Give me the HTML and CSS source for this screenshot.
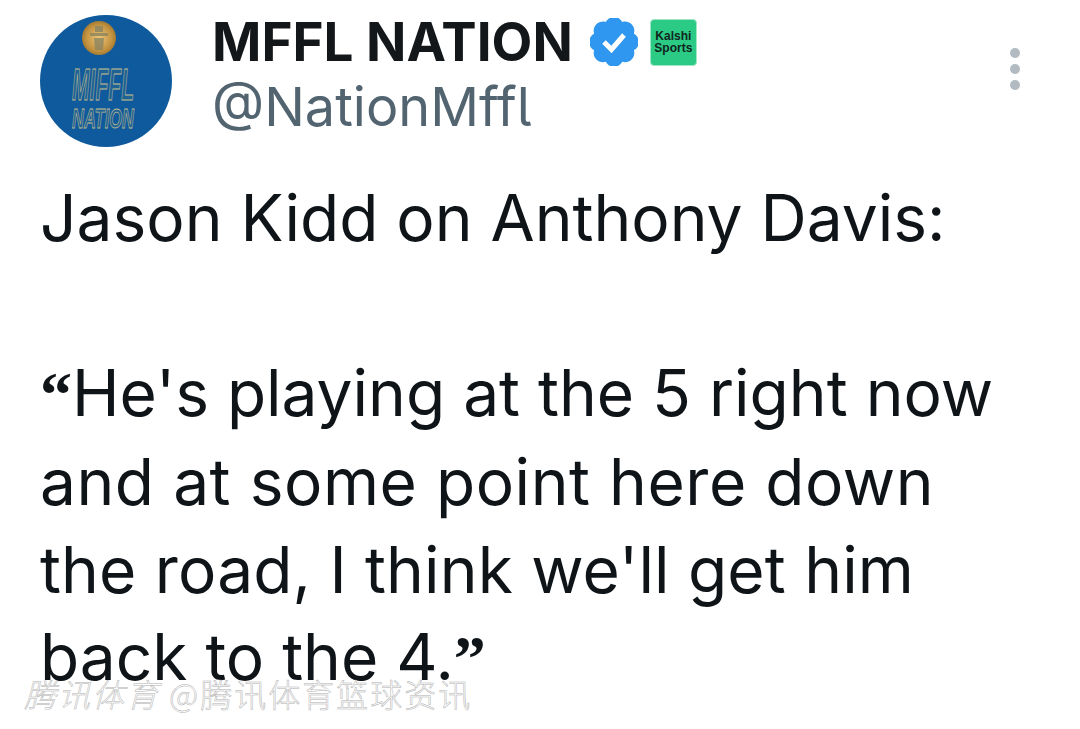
FILE: index.html
```html
<!DOCTYPE html>
<html lang="en">
<head>
<meta charset="utf-8">
<title>MFFL NATION</title>
<link rel="stylesheet" href="styles.css">
</head>
<body>
<main class="post">
  <header class="head">
    <svg class="avatar" viewBox="0 0 132 132" aria-hidden="true">
      <defs>
        <radialGradient id="gold" cx="50%" cy="50%" r="55%">
          <stop offset="0" stop-color="#edc77a"/>
          <stop offset="0.7" stop-color="#c2923f"/>
          <stop offset="1" stop-color="#96702e"/>
        </radialGradient>
      </defs>
      <circle cx="66" cy="66" r="66" fill="#0f5a9c"/>
      <circle cx="59" cy="23" r="17" fill="url(#gold)"/>
      <path d="M55 11h8v6h-8zM50 18h18v3H50zM54 23h10l-1 12h-8z" fill="#8b8560" opacity=".8"/>
      <text class="av-big" x="63" y="85" textLength="62" lengthAdjust="spacingAndGlyphs">MIFFL</text>
      <text class="av-small" x="63" y="113" textLength="62" lengthAdjust="spacingAndGlyphs">NATION</text>
    </svg>
    <div class="who">
      <div class="name-row">
        <span class="name">MFFL NATION</span>
        <svg class="badge" viewBox="0 0 48 48" aria-hidden="true">
          <path fill="#2f97f0" d="M24 1.500c3.600 0 6.600 2 8.200 5 3.300-1 6.900-.2 9.400 2.300 2.600 2.600 3.300 6.200 2.300 9.400 3 1.600 5 4.600 5 8.200s-2 6.600-5 8.200c1 3.300.3 6.900-2.300 9.400-2.500 2.600-6.100 3.300-9.400 2.300-1.600 3-4.600 5-8.200 5s-6.600-2-8.200-5c-3.300 1-6.900.3-9.400-2.300-2.600-2.500-3.300-6.100-2.300-9.400-3-1.600-5-4.600-5-8.200s2-6.600 5-8.200c-1-3.200-.3-6.800 2.300-9.400 2.500-2.500 6.100-3.300 9.400-2.300 1.600-3 4.600-5 8.200-5z" transform="translate(0 -2.500)"/>
          <path fill="none" stroke="#fff" stroke-width="5" d="M14 24l7.500 7.500L34 17"/>
        </svg>
        <span class="sponsor">Kalshi<br>Sports</span>
      </div>
      <div class="handle">@NationMffl</div>
    </div>
    <div class="more" aria-hidden="true"><i></i><i></i><i></i></div>
  </header>
  <div class="body">
    <p>Jason Kidd on Anthony Davis:</p>
    <p>&nbsp;</p>
    <p><span class="q">“</span>He's playing at the 5 right now</p>
    <p class="wide">and at some point here down</p>
    <p class="snug">the road, I think we'll get him</p>
    <p>back to the 4.<span class="q">”</span></p>
  </div>
</main>
<div class="mark"><em>腾讯体育</em> @腾讯体育篮球资讯</div>
</body>
</html>
```
FILE: styles.css
```css
* { box-sizing: border-box; }
html, body { margin: 0; height: 100%; }
body {
  background: #fff;
  color: #0f1419;
  font-family: Inter, "Liberation Sans", sans-serif;
  overflow: hidden;
  position: relative;
}
.post { padding: 15px 40px 0; }
.head { display: flex; align-items: flex-start; height: 132px; }
.avatar { width: 132px; height: 132px; flex: none; }
.av-big {
  font: italic 700 44px "Liberation Sans Narrow", "Liberation Sans", sans-serif;
  text-anchor: middle;
  fill: #1f6396;
  stroke: #c2bd8e;
  stroke-width: 1;
}
.av-small {
  font: italic 700 28px "Liberation Sans Narrow", "Liberation Sans", sans-serif;
  text-anchor: middle;
  fill: #1f6396;
  stroke: #c2bd8e;
  stroke-width: .8;
}
.who { margin-left: 40px; flex: 1; }
.name-row { display: flex; align-items: center; height: 54px; }
.name { font-size: 53px; font-weight: 700; line-height: 54px; color: #14171a; }
.badge { width: 48px; height: 48px; margin-left: 17px; flex: none; }
.sponsor {
  width: 47px;
  height: 47px;
  margin-left: 12px;
  flex: none;
  display: flex;
  flex-wrap: wrap;
  align-items: center;
  align-content: center;
  justify-content: center;
  text-align: center;
  background: #2bcb86;
  border: 1px solid #9fe6c6;
  border-radius: 4px;
  color: #10261d;
  font: 700 12px/12px "Liberation Sans", sans-serif;
}
.sponsor br { flex-basis: 100%; }
.handle { margin-top: 8px; font-size: 54px; line-height: 60px; color: #536471; font-weight: 400; font-feature-settings: "cv05"; }
.more { width: 10px; margin: 33px 20px 0 0; display: flex; flex-direction: column; gap: 6px; flex: none; }
.more i { display: block; width: 10px; height: 10px; border-radius: 50%; background: #b1bbc1; }
.body { margin-top: 27px; }
.body p { margin: 0; font-size: 64px; line-height: 87.400px; white-space: nowrap; }
.body .wide { letter-spacing: .55px; }
.body .snug { letter-spacing: .17px; }
.q { font-family: "Liberation Serif", serif; font-weight: 700; }
.mark {
  position: absolute;
  left: 24px;
  top: 671px;
  font: 300 32px/44px "Noto Sans CJK SC", sans-serif;
  letter-spacing: 2px;
  color: #fff;
  -webkit-text-stroke: .5px #b0b0b0;
  white-space: nowrap;
}
.mark em { font-style: italic; }
```
